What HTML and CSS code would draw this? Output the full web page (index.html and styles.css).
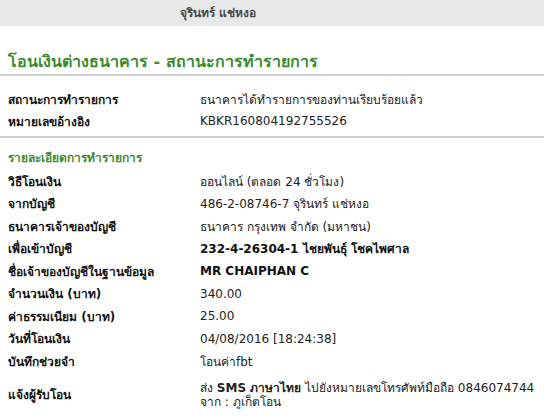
FILE: index.html
```html
<!DOCTYPE html>
<html lang="th">
<head>
    <meta charset="UTF-8">
    <title>โอนเงินต่างธนาคาร</title>
    <link rel="stylesheet" href="styles.css">
</head>
<body>
    <div class="top-bar">จุรินทร์ แช่หงอ</div>

    <h1 class="page-title">โอนเงินต่างธนาคาร - สถานะการทำรายการ</h1>

    <div class="status-box">
        <div class="row">
            <div class="label">สถานะการทำรายการ</div>
            <div class="value thai">ธนาคารได้ทำรายการของท่านเรียบร้อยแล้ว</div>
        </div>
        <div class="row">
            <div class="label">หมายเลขอ้างอิง</div>
            <div class="value">KBKR160804192755526</div>
        </div>
    </div>

    <div class="section-title">รายละเอียดการทำรายการ</div>

    <div class="details">
        <div class="row">
            <div class="label">วิธีโอนเงิน</div>
            <div class="value">ออนไลน์ (ตลอด 24 ชั่วโมง)</div>
        </div>
        <div class="row">
            <div class="label">จากบัญชี</div>
            <div class="value">486-2-08746-7 จุรินทร์ แช่หงอ</div>
        </div>
        <div class="row">
            <div class="label">ธนาคารเจ้าของบัญชี</div>
            <div class="value">ธนาคาร กรุงเทพ จำกัด (มหาชน)</div>
        </div>
        <div class="row">
            <div class="label">เพื่อเข้าบัญชี</div>
            <div class="value bold">232-4-26304-1 ไชยพันธุ์ โชคไพศาล</div>
        </div>
        <div class="row">
            <div class="label">ชื่อเจ้าของบัญชีในฐานข้อมูล</div>
            <div class="value bold">MR CHAIPHAN C</div>
        </div>
        <div class="row">
            <div class="label">จำนวนเงิน (บาท)</div>
            <div class="value">340.00</div>
        </div>
        <div class="row">
            <div class="label">ค่าธรรมเนียม (บาท)</div>
            <div class="value">25.00</div>
        </div>
        <div class="row">
            <div class="label">วันที่โอนเงิน</div>
            <div class="value">04/08/2016 [18:24:38]</div>
        </div>
        <div class="row">
            <div class="label">บันทึกช่วยจำ</div>
            <div class="value">โอนค่าfbt</div>
        </div>
        <div class="row row-center">
            <div class="label">แจ้งผู้รับโอน</div>
            <div class="value sms">ส่ง <b>SMS ภาษาไทย</b> ไปยังหมายเลขโทรศัพท์มือถือ 0846074744<br>จาก : ภูเก็ตโอน</div>
        </div>
    </div>
</body>
</html>
```

FILE: styles.css
```css
body, html {
    margin: 0;
    background: #fff;
    font-family: "DejaVu Sans", Verdana, sans-serif;
    font-size: 12px;
    color: #111;
    overflow: hidden;
}

.top-bar {
    background-color: #e8e8e8;
    height: 26px;
    line-height: 26px;
    padding-left: 180px;
    font-weight: bold;
    color: #4a4a4a;
}

.page-title {
    margin: 0;
    padding: 23px 8px 0 8px;
    height: 25px;
    font-size: 16px;
    font-weight: bold;
    color: #3d8b2e;
}

.status-box {
    border-top: 2px solid #cfcfcf;
    border-bottom: 2px solid #cfcfcf;
    padding: 12px 0 4px 0;
}

.row {
    display: flex;
    align-items: center;
    min-height: 22px;
    padding-left: 8px;
}

.details .row {
    min-height: 22.5px;
}

.details .row-center {
    padding-top: 8px;
}

.label {
    width: 192px;
    font-weight: bold;
    flex-shrink: 0;
}

.value {
    color: #222;
}

.value.bold {
    font-weight: bold;
    color: #111;
}

.sms {
    line-height: 14px;
}

.section-title {
    padding: 10px 8px 0 8px;
    height: 22px;
    font-weight: bold;
    color: #3d8b2e;
}
```
